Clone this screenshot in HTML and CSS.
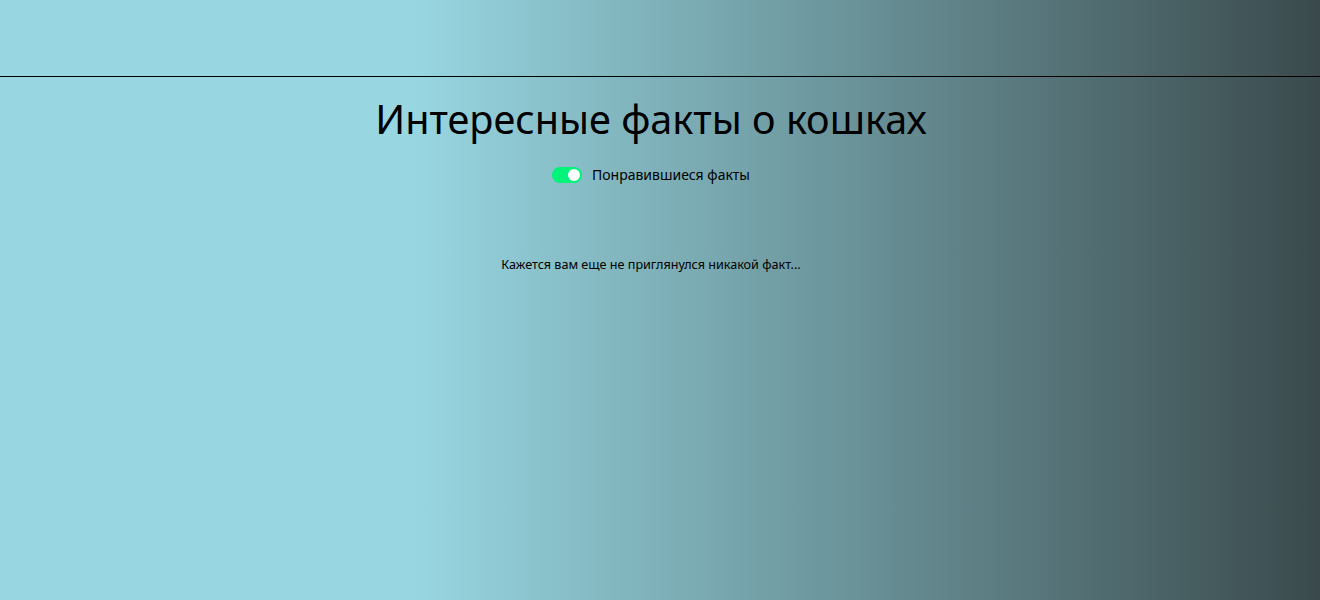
FILE: index.html
```html
<!DOCTYPE html>
<html lang="ru">
<head>
<meta charset="utf-8">
<title>Интересные факты о кошках</title>
<link rel="stylesheet" href="styles.css">
</head>
<body>
<header class="header"></header>
<main class="main">
  <h1 class="title">Интересные факты о кошках</h1>
  <label class="filter">
    <span class="switch"><span class="knob"></span></span>
    <span class="filter-label">Понравившиеся факты</span>
  </label>
  <p class="empty">Кажется вам еще не приглянулся никакой факт...</p>
</main>
</body>
</html>
```
FILE: styles.css
```css
html, body {
  margin: 0;
  padding: 0;
  height: 100%;
}
body {
  font-family: "Noto Sans", "Open Sans", sans-serif;
  color: #000;
  background: linear-gradient(to right, #98d7e2 0%, #98d7e2 31%, #3a4a4c 100%);
  min-height: 600px;
}
.header {
  height: 76px;
  border-bottom: 1px solid #000;
}
.main {
  display: flex;
  flex-direction: column;
  align-items: center;
  padding-right: 18px;
}
.title {
  margin: 14px 0 0;
  font-size: 39.6px;
  font-weight: 400;
  line-height: 56px;
}
.filter {
  margin-top: 18px;
  display: flex;
  align-items: center;
  gap: 10px;
  font-size: 14px;
}
.switch {
  width: 30px;
  height: 16px;
  border-radius: 8px;
  background: #00f47a;
  display: flex;
  align-items: center;
  justify-content: flex-end;
  padding: 0 2px;
  box-sizing: border-box;
}
.knob {
  width: 12px;
  height: 12px;
  border-radius: 50%;
  background: #fff;
}
.filter-label {
  line-height: 20px;
}
.empty {
  margin: 71px 0 0;
  font-size: 12.6px;
  line-height: 18px;
}
```
